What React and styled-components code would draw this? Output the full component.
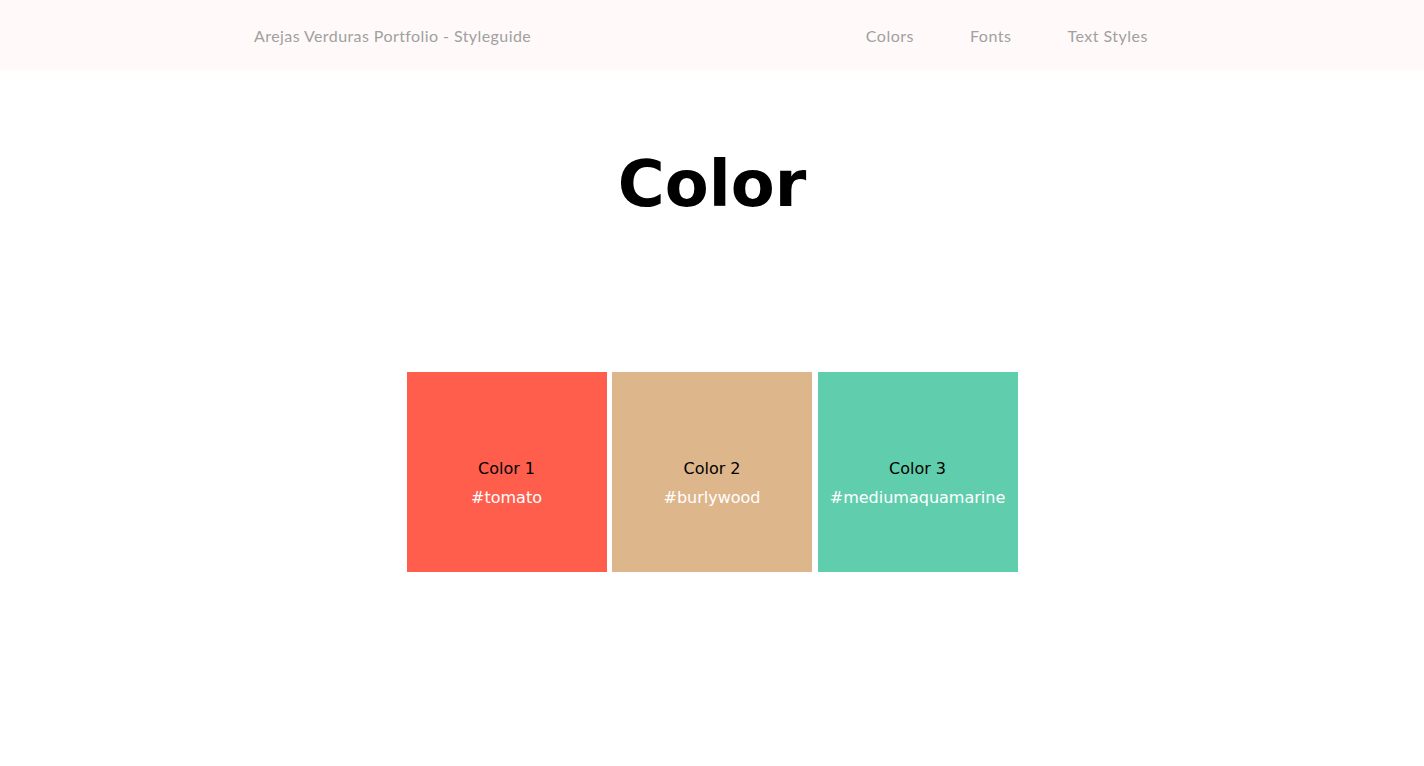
import React from "react";
import styled, { createGlobalStyle } from "styled-components";

const Global = createGlobalStyle`
  html, body { margin: 0; padding: 0; background: #ffffff; }
  body { font-family: "DejaVu Sans", Verdana, sans-serif; }
`;

const Header = styled.header`
  height: 70px;
  background: #fffaf9;
  display: flex;
  align-items: center;
`;

const HeaderInner = styled.div`
  width: 916px;
  margin: 0 auto;
  display: flex;
  align-items: center;
  justify-content: space-between;
  font-family: Lato, "Open Sans", sans-serif;
  font-size: 16px;
  color: #a0a0a0;
`;

const Brand = styled.a`
  color: inherit;
  text-decoration: none;
  letter-spacing: 0.42px;
`;

const Nav = styled.nav`
  display: flex;
  gap: 56px;
  padding-right: 22px;
`;

const NavLink = styled.a`
  color: inherit;
  text-decoration: none;
  letter-spacing: 0.5px;
`;

const Main = styled.main`
  display: flex;
  flex-direction: column;
  align-items: center;
`;

const Title = styled.h1`
  margin: 77px 0 0;
  font-family: "DejaVu Sans", Verdana, sans-serif;
  font-weight: bold;
  font-size: 64px;
  line-height: 74px;
  color: #000;
`;

const Swatches = styled.div`
  display: flex;
  gap: 5.5px;
  margin-top: 151px;
`;

const Swatch = styled.div`
  width: 200px;
  height: 200px;
  box-sizing: border-box;
  padding-top: 21px;
  background: ${(p) => p.$color};
  display: flex;
  flex-direction: column;
  align-items: center;
  justify-content: center;
  gap: 10px;
  font-family: "DejaVu Sans", Verdana, sans-serif;
  font-size: 16px;
  line-height: 19px;
`;

const SwatchName = styled.span`
  color: #000;
`;

const SwatchCode = styled.span`
  color: #fff;
`;

const colors = [
  { name: "Color 1", value: "tomato", shown: "#ff5e4d" },
  { name: "Color 2", value: "burlywood", shown: "#deb68c" },
  { name: "Color 3", value: "mediumaquamarine", shown: "#60ceac" },
];

export default function App() {
  return (
    <>
      <Global />
      <Header>
        <HeaderInner>
          <Brand href="#">Arejas Verduras Portfolio - Styleguide</Brand>
          <Nav>
            <NavLink href="#">Colors</NavLink>
            <NavLink href="#">Fonts</NavLink>
            <NavLink href="#">Text Styles</NavLink>
          </Nav>
        </HeaderInner>
      </Header>
      <Main>
        <Title>Color</Title>
        <Swatches>
          {colors.map((c) => (
            <Swatch key={c.value} $color={c.shown}>
              <SwatchName>{c.name}</SwatchName>
              <SwatchCode>#{c.value}</SwatchCode>
            </Swatch>
          ))}
        </Swatches>
      </Main>
    </>
  );
}
